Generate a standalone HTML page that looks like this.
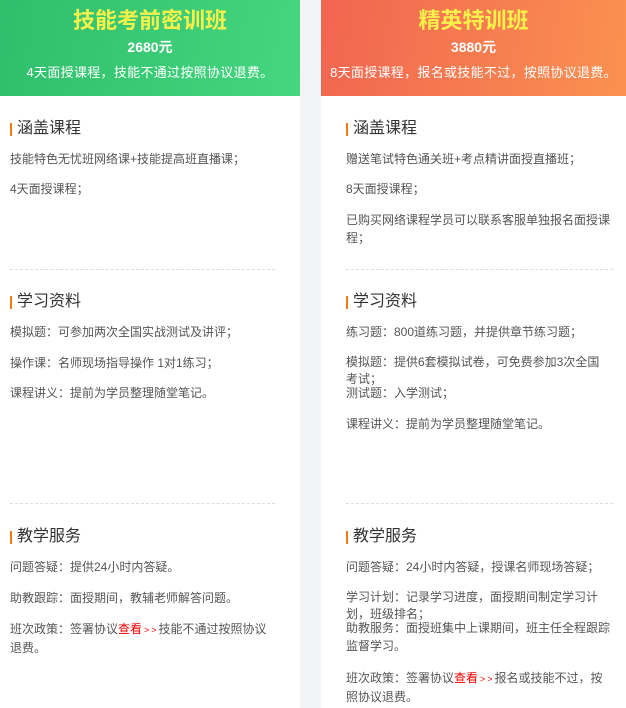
<!DOCTYPE html>
<html><head><meta charset="utf-8"><style>
*{margin:0;padding:0;box-sizing:border-box}
body{width:626px;height:708px;background:#f2f3f5;position:relative;overflow:hidden;font-family:"Liberation Sans","Noto Sans CJK SC",sans-serif}
.col{position:absolute;top:0;height:708px;background:#fff}
.hd{position:absolute;left:0;top:0;width:100%;height:96px;text-align:center;color:#fff}
.hd .t{position:absolute;left:0;right:0;top:7px;font-size:22px;font-weight:bold;color:#f6f04a;line-height:28px}
.hd .p{position:absolute;left:0;right:0;top:38px;font-size:14px;font-weight:bold;line-height:18px}
.hd .s{position:absolute;left:0;right:0;top:64px;font-size:13px;line-height:18px;letter-spacing:0.3px}
.h{position:absolute;font-size:16px;color:#333;line-height:20px;padding-left:7px}
.h:before{content:"";position:absolute;left:0;top:4px;width:2px;height:13px;background:#f57a12}
.l{position:absolute;font-size:12px;color:#555;line-height:18px;width:275px}
.d{position:absolute;height:0;border-top:1px dashed #ddd}
.r{color:#e00}
.g{color:#e00;font-size:9px;letter-spacing:2px;margin-left:2px}
</style></head><body>
<div class="col" style="left:0;width:300px">
 <div class="hd" style="background:linear-gradient(100deg,#2fbe6b,#45d67f)">
  <div class="t">技能考前密训班</div><div class="p">2680元</div><div class="s">4天面授课程，技能不通过按照协议退费。</div>
 </div>
 <div class="h" style="left:10px;top:119px">涵盖课程</div>
 <div class="l" style="left:10px;top:150px">技能特色无忧班网络课+技能提高班直播课；</div>
 <div class="l" style="left:10px;top:180px">4天面授课程；</div>
 <div class="d" style="left:10px;width:265px;top:269px"></div>
 <div class="h" style="left:10px;top:292px">学习资料</div>
 <div class="l" style="left:10px;top:323px">模拟题：可参加两次全国实战测试及讲评；</div>
 <div class="l" style="left:10px;top:354px">操作课：名师现场指导操作 1对1练习；</div>
 <div class="l" style="left:10px;top:384px">课程讲义：提前为学员整理随堂笔记。</div>
 <div class="d" style="left:10px;width:265px;top:503px"></div>
 <div class="h" style="left:10px;top:527px">教学服务</div>
 <div class="l" style="left:10px;top:558px">问题答疑：提供24小时内答疑。</div>
 <div class="l" style="left:10px;top:589px">助教跟踪：面授期间，教辅老师解答问题。</div>
 <div class="l" style="left:10px;top:620px;width:262px">班次政策：签署协议<span class="r">查看</span><span class="g">&gt;&gt;</span>技能不通过按照协议退费。</div>
</div>
<div class="col" style="left:321px;width:305px">
 <div class="hd" style="background:linear-gradient(100deg,#f16551,#fb9150)">
  <div class="t">精英特训班</div><div class="p">3880元</div><div class="s">8天面授课程，报名或技能不过，按照协议退费。</div>
 </div>
 <div class="h" style="left:25px;top:119px">涵盖课程</div>
 <div class="l" style="left:25px;top:150px">赠送笔试特色通关班+考点精讲面授直播班；</div>
 <div class="l" style="left:25px;top:180px">8天面授课程；</div>
 <div class="l" style="left:25px;top:211px;width:268px">已购买网络课程学员可以联系客服单独报名面授课程；</div>
 <div class="d" style="left:25px;width:267px;top:269px"></div>
 <div class="h" style="left:25px;top:292px">学习资料</div>
 <div class="l" style="left:25px;top:323px">练习题：800道练习题，并提供章节练习题；</div>
 <div class="l" style="left:25px;top:354px;width:262px;line-height:17px">模拟题：提供6套模拟试卷，可免费参加3次全国考试；</div>
 <div class="l" style="left:25px;top:384px">测试题：入学测试；</div>
 <div class="l" style="left:25px;top:415px">课程讲义：提前为学员整理随堂笔记。</div>
 <div class="d" style="left:25px;width:267px;top:503px"></div>
 <div class="h" style="left:25px;top:527px">教学服务</div>
 <div class="l" style="left:25px;top:558px">问题答疑：24小时内答疑，授课名师现场答疑；</div>
 <div class="l" style="left:25px;top:589px;width:262px;line-height:17px">学习计划：记录学习进度，面授期间制定学习计划，班级排名；</div>
 <div class="l" style="left:25px;top:619px;width:270px">助教服务：面授班集中上课期间，班主任全程跟踪监督学习。</div>
 <div class="l" style="left:25px;top:669px;width:262px">班次政策：签署协议<span class="r">查看</span><span class="g">&gt;&gt;</span>报名或技能不过，按照协议退费。</div>
</div>
</body></html>
